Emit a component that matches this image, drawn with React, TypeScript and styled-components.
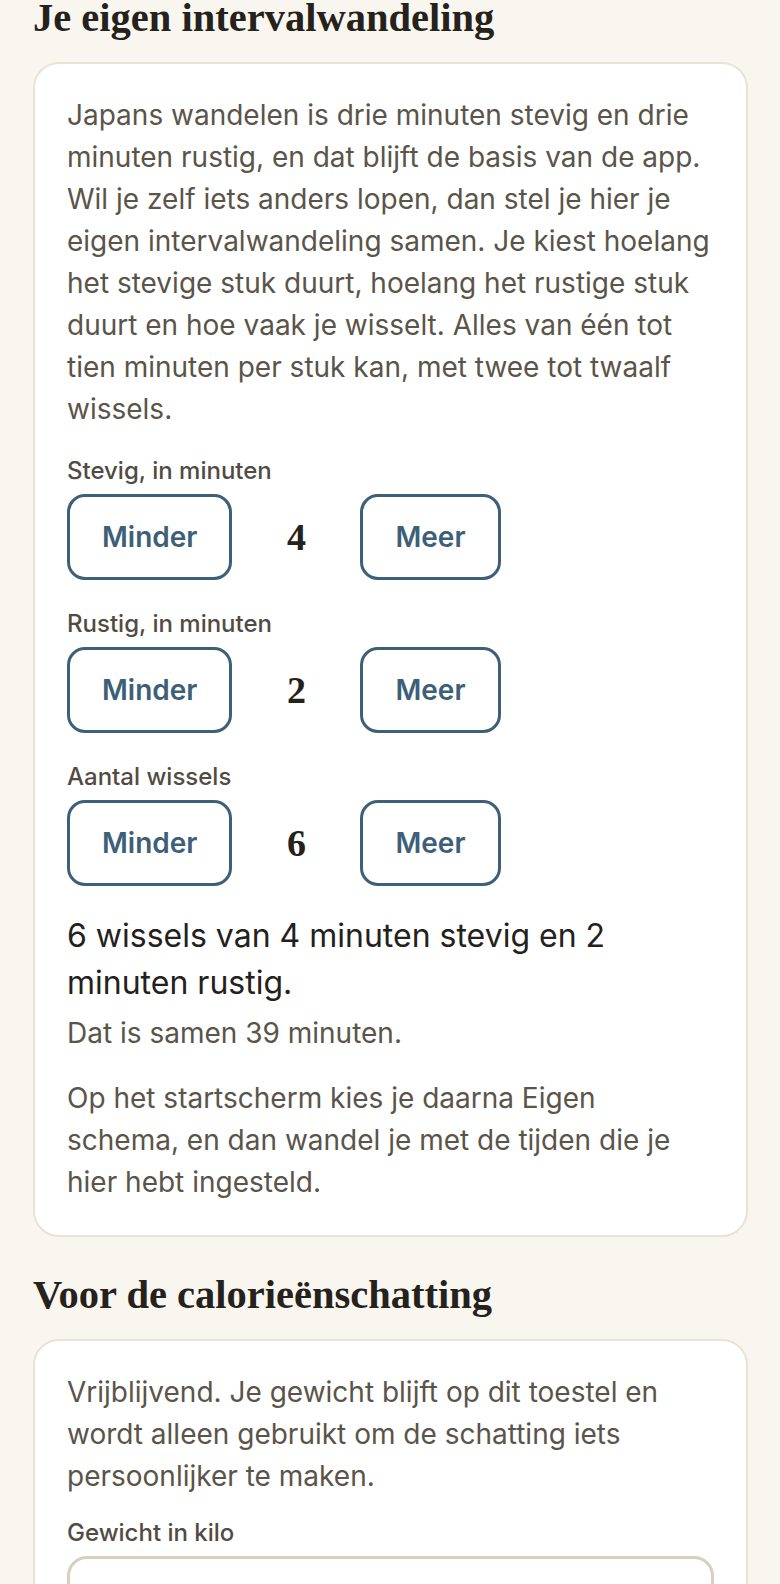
import React, { useState } from 'react';
import styled, { createGlobalStyle } from 'styled-components';

const GlobalStyle = createGlobalStyle`
  html, body {
    margin: 0;
    padding: 0;
    background: #f9f6f0;
  }
  body {
    font-family: Inter, "Noto Sans", "Liberation Sans", sans-serif;
    color: #5a5449;
    overflow: hidden;
  }
`;

const Page = styled.div`
  margin-top: -6px;
  padding: 0 32px 0 33px;
`;

const Section = styled.section`
  & + & {
    margin-top: 34px;
  }
`;

const Heading = styled.h2`
  margin: 0 0 20px 0;
  font-family: "Liberation Serif", "DejaVu Serif", serif;
  font-weight: 700;
  font-size: 40.5px;
  line-height: 48px;
  color: #25211b;
`;

const Card = styled.div`
  background: #ffffff;
  border: 2px solid #e9e2d5;
  border-radius: 26px;
  padding: 30px 32px 32px 32px;
`;

const Text = styled.p<{ $gap?: number }>`
  margin: 0 0 ${(p) => p.$gap ?? 0}px 0;
  font-size: 28px;
  line-height: 42px;
  color: #5a5449;
`;

const Field = styled.div`
  & + & {
    margin-top: 29px;
  }
`;

const Label = styled.div`
  font-size: 24px;
  line-height: 30px;
  font-weight: 500;
  color: #514b42;
  margin-bottom: 8px;
`;

const Stepper = styled.div`
  display: flex;
  align-items: center;
  gap: 31px;
`;

const StepButton = styled.button`
  box-sizing: border-box;
  height: 86px;
  padding: 0 32px;
  background: #ffffff;
  border: 3px solid #3e5f78;
  border-radius: 18px;
  font-family: Inter, "Liberation Sans", sans-serif;
  font-size: 28px;
  font-weight: 600;
  color: #3e5f78;
  cursor: pointer;
`;

const Value = styled.div`
  min-width: 66px;
  text-align: center;
  font-family: "Liberation Serif", "DejaVu Serif", serif;
  font-weight: 700;
  font-size: 38px;
  color: #25211b;
`;

const Summary = styled.p`
  margin: 26px 0 6px 0;
  font-size: 32px;
  line-height: 47px;
  color: #24211d;
`;

const WeightInput = styled.input`
  box-sizing: border-box;
  display: block;
  width: 100%;
  height: 86px;
  border: 3px solid #d8cfbf;
  border-radius: 20px;
  background: #ffffff;
  font-family: Inter, "Liberation Sans", sans-serif;
  font-size: 28px;
  padding: 0 24px;
  outline: none;
`;

type StepperProps = {
  label: string;
  value: number;
  onChange: (v: number) => void;
  min: number;
  max: number;
};

const StepField = ({ label, value, onChange, min, max }: StepperProps) => (
  <Field>
    <Label>{label}</Label>
    <Stepper>
      <StepButton onClick={() => onChange(Math.max(min, value - 1))}>Minder</StepButton>
      <Value>{value}</Value>
      <StepButton onClick={() => onChange(Math.min(max, value + 1))}>Meer</StepButton>
    </Stepper>
  </Field>
);

const App = () => {
  const [stevig, setStevig] = useState(4);
  const [rustig, setRustig] = useState(2);
  const [wissels, setWissels] = useState(6);
  const total = wissels * (stevig + rustig) + 3;

  return (
    <>
      <GlobalStyle />
      <Page>
        <Section>
          <Heading>Je eigen intervalwandeling</Heading>
          <Card>
            <Text $gap={26}>
              Japans wandelen is drie minuten stevig en drie minuten rustig, en dat blijft de basis
              van de app. Wil je zelf iets anders lopen, dan stel je hier je eigen intervalwandeling
              samen. Je kiest hoelang het stevige stuk duurt, hoelang het rustige stuk duurt en hoe
              vaak je wisselt. Alles van één tot tien minuten per stuk kan, met twee tot twaalf
              wissels.
            </Text>
            <StepField label="Stevig, in minuten" value={stevig} onChange={setStevig} min={1} max={10} />
            <StepField label="Rustig, in minuten" value={rustig} onChange={setRustig} min={1} max={10} />
            <StepField label="Aantal wissels" value={wissels} onChange={setWissels} min={2} max={12} />
            <Summary>
              {wissels} wissels van {stevig} minuten stevig en {rustig} minuten rustig.
            </Summary>
            <Text $gap={23}>Dat is samen {total} minuten.</Text>
            <Text>
              Op het startscherm kies je daarna Eigen schema, en dan wandel je met de tijden die je
              hier hebt ingesteld.
            </Text>
          </Card>
        </Section>
        <Section>
          <Heading>Voor de calorieënschatting</Heading>
          <Card>
            <Text $gap={21}>
              Vrijblijvend. Je gewicht blijft op dit toestel en wordt alleen gebruikt om de
              schatting iets persoonlijker te maken.
            </Text>
            <Label>Gewicht in kilo</Label>
            <WeightInput type="text" inputMode="decimal" />
          </Card>
        </Section>
      </Page>
    </>
  );
};

export default App;
